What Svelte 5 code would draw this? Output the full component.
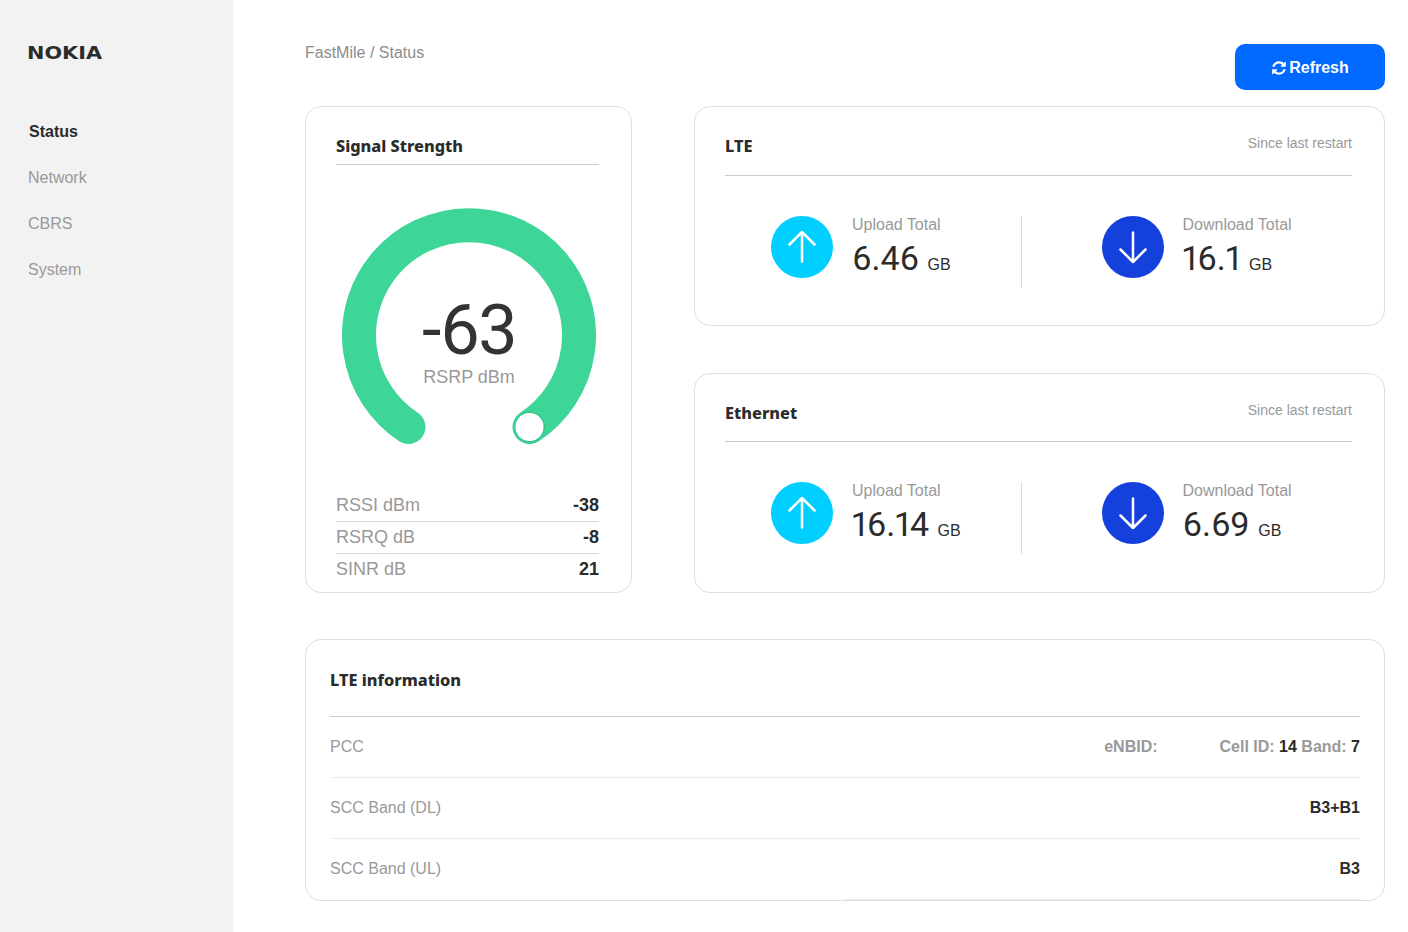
<script>
  const nav = ['Status', 'Network', 'CBRS', 'System'];

  const signal = [
    { label: 'RSSI dBm', value: '-38' },
    { label: 'RSRQ dB', value: '-8' },
    { label: 'SINR dB', value: '21' }
  ];

  const traffic = [
    { name: 'LTE', cls: 'lte', upload: '6.46', download: '16.1' },
    { name: 'Ethernet', cls: 'eth', upload: '16.14', download: '6.69' }
  ];
</script>

<div class="page">
  <aside class="sidebar">
    <svg class="logo" width="84" height="16" viewBox="0 0 84 16" role="img" aria-label="Nokia">
      <text x="0" y="14" textLength="75" lengthAdjust="spacingAndGlyphs">NOKIA</text>
    </svg>
    <nav>
      {#each nav as item, i}
        <div class="nav-item" class:active={i === 0}>{item}</div>
      {/each}
    </nav>
  </aside>

  <main>
    <header class="top">
      <div class="crumbs">FastMile / Status</div>
      <button type="button" class="refresh">
        <svg width="16" height="16" viewBox="0 0 1792 1792" fill="currentColor">
          <path d="M1639 1056q0 5-1 7-64 268-268 434.5t-478 166.5q-146 0-282.5-55t-243.5-157l-129 129q-19 19-45 19t-45-19-19-45v-448q0-26 19-45t45-19h448q26 0 45 19t19 45-19 45l-137 137q71 66 161 102t187 36q134 0 250-65t186-179q11-17 53-117 8-23 30-23h192q13 0 22.5 9.5t9.5 22.5zm25-800v448q0 26-19 45t-45 19h-448q-26 0-45-19t-19-45 19-45l138-138q-148-137-349-137-134 0-250 65t-186 179q-11 17-53 117-8 23-30 23h-199q-13 0-22.5-9.5t-9.5-22.5v-7q65-268 270-434.5t480-166.5q146 0 284 55.5t245 156.5l130-129q19-19 45-19t45 19 19 45z" />
        </svg>
        Refresh
      </button>
    </header>

    <div class="grid">
      <section class="card signal">
        <h3 class="title signal-title">Signal Strength</h3>
        <div class="gauge">
          <svg width="254" height="264" viewBox="4.5 0 254 264">
            <defs>
              <filter id="knob" x="-30%" y="-30%" width="160%" height="160%">
                <feDropShadow dx="0" dy="0" stdDeviation="1" flood-color="#000" flood-opacity="0.35" />
              </filter>
            </defs>
            <path d="M71 224 A110 110 0 1 1 192 224" fill="none" stroke="#3ed598" stroke-width="34" stroke-linecap="round" />
            <circle cx="192" cy="224" r="14" fill="#fff" filter="url(#knob)" />
          </svg>
          <div class="reading">
            <div class="rsrp">-63</div>
            <div class="rsrp-label">RSRP dBm</div>
          </div>
        </div>
        <div class="stats">
          {#each signal as row}
            <div class="stat-row">
              <span>{row.label}</span>
              <strong>{row.value}</strong>
            </div>
          {/each}
        </div>
      </section>

      <div class="traffic">
        {#each traffic as t}
          <section class="card traffic-card {t.cls}">
            <div class="traffic-head">
              <h3 class="title">{t.name}</h3>
              <span class="since">Since last restart</span>
            </div>
            <div class="traffic-body">
              <div class="half up">
                <div class="circle cyan">
                  <svg width="30" height="34" viewBox="0 0 30 34" fill="none" stroke="#fff" stroke-width="2.5" stroke-linecap="round" stroke-linejoin="round">
                    <path d="M15 31.5V2M2.5 14.5 15 2l12.5 12.5" />
                  </svg>
                </div>
                <div class="figures">
                  <div class="fig-label">Upload Total</div>
                  <div class="fig-value">{t.upload}<small>GB</small></div>
                </div>
              </div>
              <div class="half down">
                <div class="circle blue">
                  <svg width="30" height="34" viewBox="0 0 30 34" fill="none" stroke="#fff" stroke-width="2.5" stroke-linecap="round" stroke-linejoin="round">
                    <path d="M15 2.5V32M2.5 19.5 15 32l12.5-12.5" />
                  </svg>
                </div>
                <div class="figures">
                  <div class="fig-label">Download Total</div>
                  <div class="fig-value">{t.download}<small>GB</small></div>
                </div>
              </div>
            </div>
          </section>
        {/each}
      </div>
    </div>

    <section class="card info">
      <h3 class="title info-title">LTE information</h3>
      <div class="info-row">
        <span>PCC</span>
        <div class="pcc">
          <b class="enbid">eNBID:</b>
          <b>Cell ID: <em>14</em> Band: <em>7</em></b>
        </div>
      </div>
      <div class="info-row">
        <span>SCC Band (DL)</span>
        <strong>B3+B1</strong>
      </div>
      <div class="info-row">
        <span>SCC Band (UL)</span>
        <strong>B3</strong>
      </div>
    </section>
  </main>
</div>

<style>
  :global(body) {
    margin: 0;
    background: #fff;
    font-family: "Liberation Sans", Arial, sans-serif;
    color: #999;
  }

  .page {
    display: flex;
    min-height: 932px;
  }

  .sidebar {
    width: 233px;
    flex: none;
    background: #f2f2f2;
    padding: 45px 0 0 27px;
    box-sizing: border-box;
  }

  .logo {
    display: block;
  }

  .logo text {
    font-family: "DejaVu Sans", sans-serif;
    font-weight: 700;
    font-size: 17px;
    fill: #2b2b2b;
  }

  nav {
    margin-top: 48px;
    padding-left: 1px;
  }

  .nav-item {
    height: 46px;
    line-height: 46px;
    font-size: 16px;
    color: #999;
  }

  .nav-item.active {
    color: #2b2b2b;
    font-weight: 700;
    padding-left: 1px;
  }

  main {
    width: 1080px;
    margin-left: 72px;
    padding-top: 44px;
  }

  .top {
    display: flex;
    justify-content: space-between;
    align-items: flex-start;
    margin-bottom: 16px;
  }

  .crumbs {
    font-size: 16px;
    line-height: 18px;
    color: #8c8c8c;
  }

  .refresh {
    width: 150px;
    height: 46px;
    border: 0;
    border-radius: 10px;
    background: #0069ff;
    color: #fff;
    font: 700 16px "Liberation Sans", Arial, sans-serif;
    display: flex;
    align-items: center;
    justify-content: center;
    gap: 2px;
    padding: 1px 0 0;
  }

  .grid {
    display: grid;
    grid-template-columns: 327px 691px;
    justify-content: space-between;
    margin-bottom: 46px;
  }

  .card {
    border: 1px solid #dedede;
    border-radius: 16px;
    box-sizing: border-box;
    background: #fff;
  }

  .title {
    margin: 0;
    font-family: "Noto Sans", sans-serif;
    font-weight: 800;
    font-size: 16.3px;
    line-height: 24px;
    color: #2b2b2b;
  }

  .signal {
    height: 487px;
    padding: 27px 32px 0 30px;
  }

  .signal-title {
    padding-bottom: 6px;
    border-bottom: 1px solid #ccc;
  }

  .gauge {
    position: relative;
    height: 264px;
    margin-top: 38px;
    padding-left: 6px;
    display: flex;
  }

  .gauge svg {
    display: block;
    flex: none;
  }

  .reading {
    position: absolute;
    left: 3px;
    right: 0;
    top: 92px;
    text-align: center;
  }

  .rsrp {
    font-family: Roboto, sans-serif;
    font-variant-numeric: proportional-nums;
    font-size: 70px;
    line-height: 71px;
    letter-spacing: -1.5px;
    color: #333;
  }

  .rsrp-label {
    font-size: 18px;
    line-height: 22px;
    color: #999;
  }

  .stats {
    margin-top: 23px;
  }

  .stat-row {
    display: flex;
    justify-content: space-between;
    align-items: center;
    height: 32px;
    box-sizing: border-box;
    font-size: 18px;
    border-bottom: 1px solid #d9d9d9;
  }

  .stat-row:last-child {
    border-bottom: 0;
    height: 30px;
  }

  .stat-row strong {
    color: #2b2b2b;
  }

  .traffic {
    display: flex;
    flex-direction: column;
    justify-content: space-between;
  }

  .traffic-card {
    height: 220px;
    padding: 0 32px 0 30px;
  }

  .traffic-head {
    display: flex;
    justify-content: space-between;
    border-bottom: 1px solid #ccc;
    padding-top: 27px;
    height: 41px;
  }

  .eth .traffic-head {
    height: 40px;
  }

  .since {
    font-size: 14px;
    line-height: 18px;
    color: #999;
  }

  .traffic-body {
    display: grid;
    grid-template-columns: 297px 1fr;
    margin-top: 40px;
  }

  .half {
    display: flex;
    align-items: flex-start;
    height: 72px;
  }

  .half.up {
    padding-left: 46px;
    border-right: 1px solid #d9d9d9;
  }

  .half.down {
    padding-left: 80px;
  }

  .circle {
    width: 62px;
    height: 62px;
    border-radius: 50%;
    display: flex;
    align-items: center;
    justify-content: center;
    flex: none;
  }

  .circle.cyan {
    background: #00cfff;
  }

  .circle.blue {
    background: #1440dc;
  }

  .figures {
    margin-left: 19px;
  }

  .down .figures {
    margin-left: 18.5px;
  }

  .fig-label {
    font-size: 16px;
    line-height: 18px;
    color: #999;
  }

  .fig-value {
    font-family: Roboto, sans-serif;
    font-variant-numeric: proportional-nums;
    font-size: 34px;
    line-height: 44px;
    margin-top: 2px;
    color: #2b2b2b;
    white-space: nowrap;
  }

  .fig-value small {
    font-family: "Liberation Sans", Arial, sans-serif;
    font-size: 16px;
    margin-left: 8.5px;
  }

  .info {
    height: 262px;
    padding: 0 24px;
  }

  .info-title {
    padding: 28px 0 24px;
    border-bottom: 1px solid #ccc;
  }

  .info-row {
    display: flex;
    justify-content: space-between;
    align-items: center;
    height: 61px;
    box-sizing: border-box;
    font-size: 16px;
    border-bottom: 1px solid #ececec;
  }

  /* the last row's rule only shows on its right part, just above the card border */
  .info-row:last-child {
    position: relative;
    border-bottom: 0;
    padding-bottom: 1px;
  }

  .info-row:last-child::after {
    content: '';
    position: absolute;
    left: 515px;
    right: 0;
    bottom: 0;
    height: 1px;
    background: #ececec;
  }

  .info-row strong {
    color: #2b2b2b;
  }

  .pcc {
    display: flex;
    gap: 62px;
    color: #999;
  }

  .pcc em {
    font-style: normal;
    color: #2b2b2b;
  }
</style>
